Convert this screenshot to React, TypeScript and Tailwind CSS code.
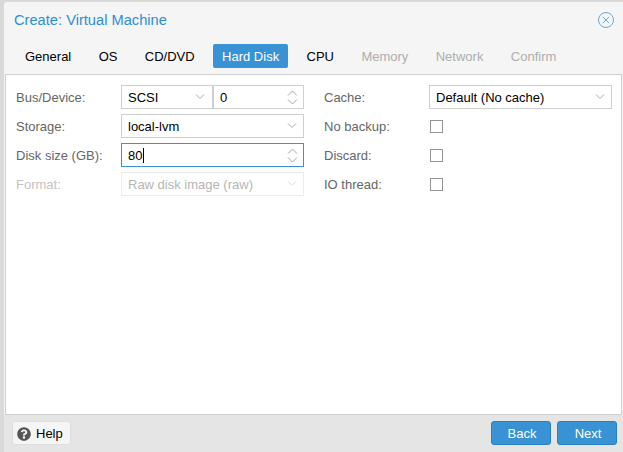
import type { ReactNode } from "react";
import { FaQuestionCircle } from "react-icons/fa";

const tabs = [
  { title: "General" },
  { title: "OS" },
  { title: "CD/DVD" },
  { title: "Hard Disk", active: true },
  { title: "CPU" },
  { title: "Memory", disabled: true },
  { title: "Network", disabled: true },
  { title: "Confirm", disabled: true },
];

function Chevron({ disabled }: { disabled?: boolean }) {
  return (
    <svg width="10" height="6" viewBox="0 0 10 6" fill="none" className={disabled ? "stroke-[#dddddd]" : "stroke-[#a6a6a6]"}>
      <path d="M1 0.5 L5 4.5 L9 0.5" />
    </svg>
  );
}

function Spinner() {
  return (
    <svg width="11" height="15" viewBox="0 0 11 15" fill="none" stroke="#a6a6a6">
      <path d="M1 5.5 L5.5 1 L10 5.5" />
      <path d="M1 9.5 L5.5 14 L10 9.5" />
    </svg>
  );
}

function Field({ value, width, pad = "pr-[6px]", disabled, focused, spinner }: { value: string; width: string; pad?: string; disabled?: boolean; focused?: boolean; spinner?: boolean }) {
  return (
    <div
      className={`flex h-6 items-center justify-between border pl-[6px] text-[13px] ${pad} ${width} ${
        focused ? "border-[#3892d4]" : disabled ? "border-[#ececec]" : "border-[#cfcfcf]"
      } ${disabled ? "text-[#b5b5b5]" : "text-black"}`}
    >
      <span className="flex items-center pt-px">
        {value}
        {focused && <span className="ml-px h-[15px] w-px bg-black" />}
      </span>
      {spinner ? <Spinner /> : <Chevron disabled={disabled} />}
    </div>
  );
}

function Row({ label, disabled, children }: { label: string; disabled?: boolean; children: ReactNode }) {
  return (
    <div className="flex h-6 items-center">
      <label className={`w-[105px] pt-px text-[13px] ${disabled ? "text-[#c4c4c4]" : "text-[#666666]"}`}>{label}</label>
      {children}
    </div>
  );
}

function Checkbox() {
  return <div className="ml-px h-[13px] w-[13px] border border-[#949494] bg-white" />;
}

export default function App() {
  return (
    <div className="h-[452px] w-[623px] overflow-hidden bg-[#d9d9d9] pl-[4px] pt-[2px] font-['Liberation_Sans',Arial,sans-serif]">
      <div className="flex h-[450px] flex-col rounded-tl-[3px] bg-[#f5f5f5]">
        {/* Title */}
        <div className="flex h-[36px] items-center justify-between pl-[10px] pr-[9px]">
          <h1 className="text-[14.67px] text-[#2e8fd2]">Create: Virtual Machine</h1>
          <svg width="16" height="16" viewBox="0 0 16 16" fill="none" stroke="#6aa9d8" strokeWidth="1">
            <circle cx="8" cy="8" r="7.5" />
            <path d="M4.8 4.8 L11.2 11.2 M11.2 4.8 L4.8 11.2" />
          </svg>
        </div>

        {/* Tabs */}
        <div className="mt-[6px] flex h-[24px] gap-[9.4px] pl-[12px]">
          {tabs.map((tab) => (
            <div
              key={tab.title}
              className={`flex items-center justify-center rounded-[2px] px-[9px] pt-px text-[13px] ${
                tab.active ? "bg-[#3892d4] text-white" : tab.disabled ? "text-[#adadad]" : "text-black"
              }`}
            >
              {tab.title}
            </div>
          ))}
        </div>

        {/* Form */}
        <div className="ml-px mr-px mt-[6px] flex flex-1 gap-5 border border-[#cfcfcf] bg-white pl-[10px] pr-2 pt-[10px]">
          <div className="flex w-[288px] flex-col gap-[5px]">
            <Row label="Bus/Device:">
              <div className="flex">
                <Field value="SCSI" width="w-[92px]" pad="pr-[7px]" />
                <Field value="0" width="w-[91px]" pad="pr-[5px]" spinner />
              </div>
            </Row>
            <Row label="Storage:">
              <Field value="local-lvm" width="w-[183px]" />
            </Row>
            <Row label="Disk size (GB):">
              <Field value="80" width="w-[183px]" pad="pr-[5px]" focused spinner />
            </Row>
            <Row label="Format:" disabled>
              <Field value="Raw disk image (raw)" width="w-[183px]" disabled />
            </Row>
          </div>
          <div className="flex w-[288px] flex-col gap-[5px]">
            <Row label="Cache:">
              <Field value="Default (No cache)" width="w-[183px]" />
            </Row>
            <Row label="No backup:">
              <Checkbox />
            </Row>
            <Row label="Discard:">
              <Checkbox />
            </Row>
            <Row label="IO thread:">
              <Checkbox />
            </Row>
          </div>
        </div>

        {/* Footer */}
        <div className="flex h-[37px] shrink-0 items-start justify-between bg-[#e5e5e5] pl-[8px] pr-[6px] pt-[6px]">
          <button className="flex h-6 w-[59px] items-center gap-[5px] rounded-[3px] border border-[#dedede] bg-[#f5f5f5] pl-[4px] pt-px text-[13px] text-black">
            <FaQuestionCircle size={14} className="text-[#555555]" />
            Help
          </button>
          <div className="flex gap-[6px]">
            <button className="h-6 w-[60px] rounded-[3px] border border-[#2a7fc0] bg-[#3892d4] pl-[2px] pt-px text-[13px] text-white">Back</button>
            <button className="h-6 w-[60px] rounded-[3px] border border-[#2a7fc0] bg-[#3892d4] pl-[2px] pt-px text-[13px] text-white">Next</button>
          </div>
        </div>
      </div>
    </div>
  );
}
